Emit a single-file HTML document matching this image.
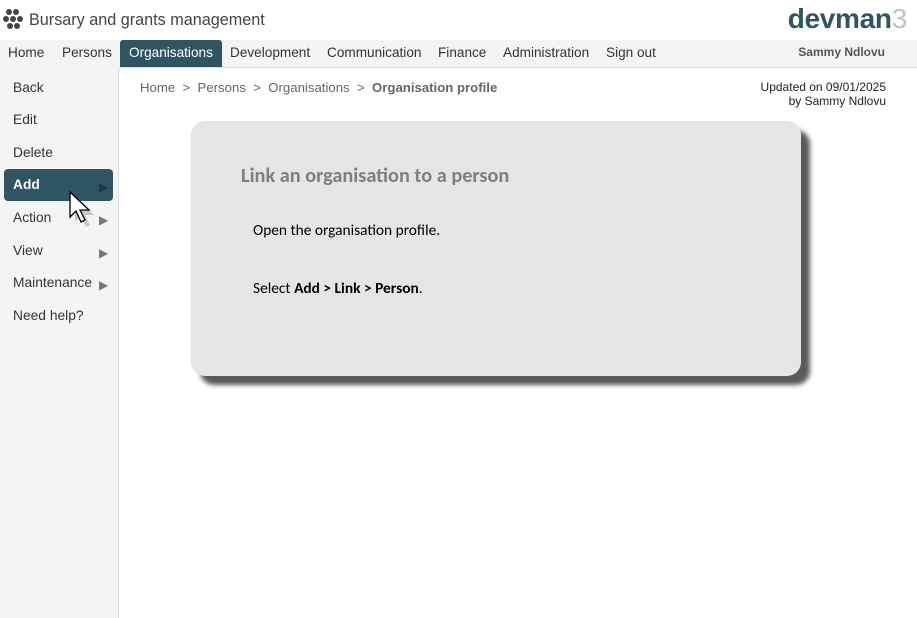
<!DOCTYPE html>
<html><head><style>
body{margin:0;width:917px;height:617px;background:#f4f4f4;font-family:"Liberation Sans",Arial,sans-serif;position:relative;overflow:hidden;color:#333}
.hdr{position:absolute;left:0;top:0;width:917px;height:40px;background:#fff}
.title{position:absolute;left:29px;top:11px;font-size:16.2px;color:#444}
.logo{position:absolute;right:10px;top:3px;font-size:28px;font-weight:bold;color:#2f5462;letter-spacing:-0.3px}
.nav{position:absolute;left:0;top:40px;width:917px;height:27px;font-size:13.6px;color:#333}
.nav span{position:absolute;top:5px}
.nav .act{background:#2f5462;color:#fff;top:0;height:27px;line-height:26px;padding:0 9px;border-radius:3px 3px 0 0;left:120px}
.user{position:absolute;right:32px;top:5px;font-size:12px;font-weight:bold;color:#555}
.main{position:absolute;left:118px;top:67px;width:799px;height:550px;background:#fff;border-left:1px solid #ddd;border-top:1px solid #ddd;border-top-left-radius:4px}
.side{position:absolute;left:0;top:67px;width:118px;font-size:13.8px}
.side div{position:absolute;left:13px}
.arr{position:absolute;left:99px;font-size:12px;color:#777}
.add{position:absolute;left:4px;top:169px;width:109px;height:32px;background:#2f5462;border-radius:4px}
.bc{position:absolute;left:140px;top:80px;font-size:13.2px;color:#666}
.upd{position:absolute;right:31px;top:80px;font-size:12px;text-align:right;color:#222;line-height:14px}
.box{position:absolute;left:191px;top:121px;width:610px;height:255px;background:#e5e5e5;border-radius:14px;box-shadow:9px 9px 5px #5a5a5a;font-family:"Carlito","Liberation Sans",sans-serif}
.box h2{position:absolute;left:50px;top:43px;margin:0;font-size:20.3px;color:#7f7f7f;font-weight:bold}
.box p{position:absolute;left:62px;margin:0;font-size:15.4px;color:#000}
</style></head><body>
<div class="hdr">
<svg style="position:absolute;left:2px;top:8px" width="24" height="22" viewBox="0 0 24 22"><g fill="#444"><circle cx="7" cy="4" r="3"/><circle cx="14" cy="4" r="3"/><circle cx="4" cy="11" r="3"/><circle cx="11" cy="11" r="3"/><circle cx="18" cy="11" r="3"/><circle cx="8" cy="18" r="3"/><circle cx="15" cy="18" r="3"/></g></svg>
<div class="title">Bursary and grants management</div>
<div class="logo">devman<span style="color:#b8c4c8;font-weight:normal">3</span></div>
</div>
<div class="nav">
<span style="left:8px">Home</span><span style="left:62px">Persons</span><span class="act">Organisations</span><span style="left:230px">Development</span><span style="left:327px">Communication</span><span style="left:438px">Finance</span><span style="left:503px">Administration</span><span style="left:606px">Sign out</span>
<div class="user">Sammy Ndlovu</div>
</div>
<div class="main"></div>
<div class="add"></div>
<div class="side">
<div style="top:13px">Back</div><div style="top:45px">Edit</div><div style="top:78px">Delete</div>
<div style="top:110px;color:#fff;font-weight:bold">Add</div><span class="arr" style="top:113px;color:#1d3a45">▶</span>
<div style="top:143px">Action</div><span class="arr" style="top:146px">▶</span>
<div style="top:176px">View</div><span class="arr" style="top:179px">▶</span>
<div style="top:208px">Maintenance</div><span class="arr" style="top:211px">▶</span>
<div style="top:241px">Need help?</div>
</div>
<svg style="position:absolute;left:68px;top:190px" width="30" height="40" viewBox="0 0 30 40"><path d="M4 4 L4 29 L10 23 L15 34 L19 32 L14 22 L23 22 Z" fill="#999" opacity="0.5" transform="translate(3,3)"/><path d="M2 2 L2 27 L8 21 L13 32 L17 30 L12 20 L21 20 Z" fill="#fff" stroke="#000" stroke-width="1.3"/></svg>
<div class="bc">Home &nbsp;&gt;&nbsp; Persons &nbsp;&gt;&nbsp; Organisations &nbsp;&gt;&nbsp; <b>Organisation profile</b></div>
<div class="upd">Updated on 09/01/2025<br>by Sammy Ndlovu</div>
<div class="box">
<h2>Link an organisation to a person</h2>
<p style="top:100px">Open the organisation profile.</p>
<p style="top:158px">Select <b>Add &gt; Link &gt; Person</b>.</p>
</div>
</body></html>
